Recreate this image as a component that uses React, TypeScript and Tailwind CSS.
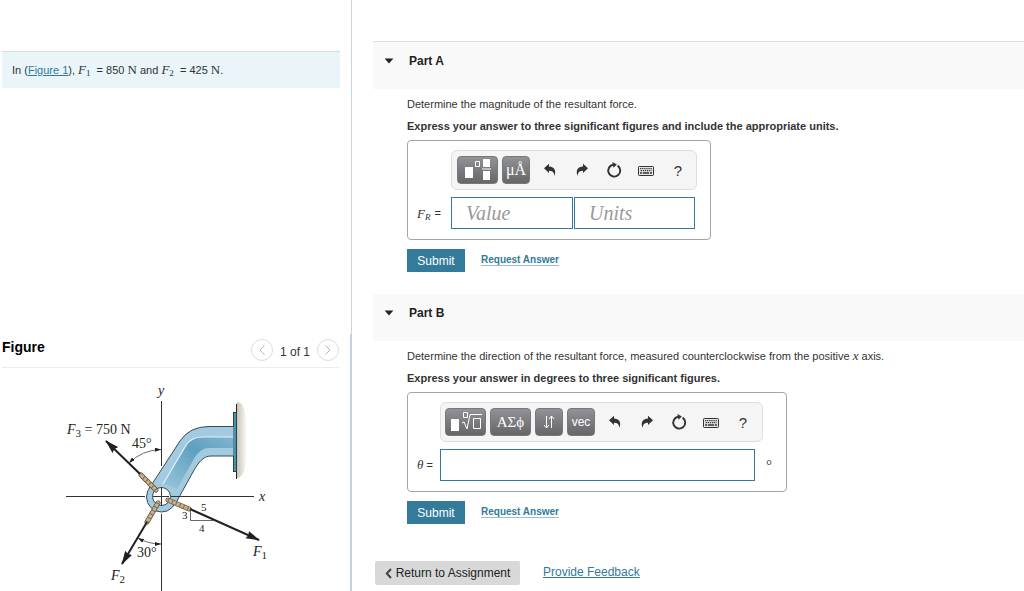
import React from 'react';

const sans = 'font-["Liberation_Sans",Arial,sans-serif]';
const serif = 'font-["Liberation_Serif",serif]';

const Sym: React.FC<{ name: string; sub?: string }> = ({ name, sub }) => (
  <span className='font-["Liberation_Serif",serif] text-[13px] leading-none'>
    <i>{name}</i>
    {sub && <sub className={`bottom-[-2px] text-[9px] ${sub === 'R' ? 'italic' : ''}`}>{sub}</sub>}
  </span>
);

const Unit: React.FC = () => (
  <span className='font-["Liberation_Serif",serif] text-[13px] leading-none'>N</span>
);

/* Dark gray template buttons in the equation toolbar */
const KeyButton: React.FC<{ label: string; wide?: boolean; children: React.ReactNode }> = ({ label, wide, children }) => (
  <button
    type="button"
    aria-label={label}
    className={`flex h-7 shrink-0 items-center justify-center rounded-[4px] border border-[#77777c] bg-linear-to-b from-[#929297] to-[#666668] leading-none text-white ${wide ? 'w-[41px]' : 'w-7'}`}
  >
    {children}
  </button>
);

const IconButton: React.FC<{ label: string; children: React.ReactNode }> = ({ label, children }) => (
  <button type="button" aria-label={label} className="flex h-7 w-8 shrink-0 items-center justify-center text-[#333]">
    {children}
  </button>
);

const ToolIcons: React.FC = () => (
  <div className="flex">
    <IconButton label="Undo">
      <svg width="14" height="14" viewBox="0 0 14 14" fill="currentColor">
        <path d="M1 5.3 6 .8v2.8c4.8.2 7.8 3.6 5.4 9.4C11.3 9.5 9.6 7.8 6 7.8V10z" />
      </svg>
    </IconButton>
    <IconButton label="Redo">
      <svg width="14" height="14" viewBox="0 0 14 14" fill="currentColor">
        <path d="M13 5.3 8 .8v2.8C3.2 3.8.2 7.2 2.6 13 2.7 9.5 4.4 7.8 8 7.8V10z" />
      </svg>
    </IconButton>
    <IconButton label="Reset">
      <svg width="16" height="18" viewBox="0 0 16 18" fill="none">
        <path d="M11.6 4.6A6 6 0 1 1 7 3.7" stroke="currentColor" strokeWidth="1.9" />
        <path d="M6.4.9 10.9 3.4 7.4 6.8z" fill="currentColor" />
      </svg>
    </IconButton>
    <IconButton label="Keyboard shortcuts">
      <svg width="18" height="12" viewBox="0 0 18 12" fill="none" stroke="currentColor" className="mt-0.5">
        <rect x="1.5" y="1.5" width="15" height="9" rx=".8" fill="#e8e8e8" />
        <path d="M3 3.7h12M3.7 5.7h11" strokeWidth="1.2" strokeDasharray="1.3 .8" />
        <path d="M3 8h2m.8 0h6.4m.8 0h2" strokeWidth="1.3" />
      </svg>
    </IconButton>
    <IconButton label="Help">
      <span className="text-[15px] leading-none">?</span>
    </IconButton>
  </div>
);

const PartHeader: React.FC<{ title: string; first?: boolean }> = ({ title, first }) => (
  <header className={`bg-[#f9f9f9] ${first ? 'border-t border-[#dcdfe0]' : ''}`}>
    <button type="button" aria-expanded="true" className="flex h-[47px] w-full items-start gap-[15px] pt-2.5 pl-[11px] text-[12px] leading-[18px] font-bold text-[#222]">
      <svg width="10" height="6" viewBox="0 0 10 6" className="mt-1.5">
        <path d="M.6.5h8.8L5 5.5z" fill="#222" />
      </svg>
      {title}
    </button>
  </header>
);

const Actions: React.FC = () => (
  <div className="mt-[9px] flex items-center gap-4">
    <button type="submit" className="h-[23px] w-[58px] bg-[#337a9b] text-[12px] leading-none text-white">
      Submit
    </button>
    <a href="#answer" className="-mt-0.5 border-b border-[#9cc0d0] text-[10px] leading-[11px] font-bold text-[#337a9b]">
      Request Answer
    </a>
  </div>
);

const Rope: React.FC<{ d: string }> = ({ d }) => (
  <g fill="none">
    <path d={d} stroke="#594735" strokeWidth="5" strokeLinecap="round" />
    <path d={d} stroke="#c6b08d" strokeWidth="3.6" strokeLinecap="round" />
    <path d={d} stroke="#7d664b" strokeWidth="3.6" strokeDasharray="1 3.2" />
  </g>
);

const ForceDiagram: React.FC = () => (
  <svg
    width="337"
    height="223"
    viewBox="2 368 337 223"
    role="img"
    aria-label="Bracket with three forces"
    className='block font-["Liberation_Serif",serif]'
  >
    <defs>
      <linearGradient id="wall" x1="0" x2="1">
        <stop offset="0" stopColor="#c9c5b5" />
        <stop offset="1" stopColor="#f8f7f3" />
      </linearGradient>
      <linearGradient id="shine" x1="0" y1="1" x2="1" y2="0">
        <stop offset="0" stopColor="#9bc5db" />
        <stop offset=".6" stopColor="#5fa0bf" />
        <stop offset="1" stopColor="#80b5ce" />
      </linearGradient>
      <marker id="tip" viewBox="0 0 14 8" refX="13" refY="4" markerWidth="14" markerHeight="9" markerUnits="userSpaceOnUse" orient="auto-start-reverse">
        <path d="M0 0 14 4 0 8 1.5 4z" fill="#231f20" />
      </marker>
      <marker id="small" viewBox="0 0 6 4" refX="6" refY="2" markerWidth="6" markerHeight="4" markerUnits="userSpaceOnUse" orient="auto-start-reverse">
        <path d="M0 0 6 2 0 4z" fill="#231f20" />
      </marker>
    </defs>

    {/* wall and mounting plate */}
    <path d="M237 402c6-1 9 10 9 20v36c0 12-4 20-9 20z" fill="url(#wall)" />
    <path d="M236.5 404v75" stroke="#222" />
    <rect x="233.5" y="412.5" width="3" height="59" fill="#4c91ad" stroke="#24414d" />

    {/* bracket, with its ring at the origin */}
    <circle cx="161.5" cy="497" r="15" fill="#a3cbe0" stroke="#3c4a52" />
    <path d="M148.5 489.5 180 441q9.5-14.5 29-14.5h24.5v29.5H211c-8 0-13 7-18 16l-18 32.5z" fill="#a3cbe0" />
    <path d="M163 484l22-37q5-10 18-10h30v11h-24q-8 0-14 9l-18 32z" fill="url(#shine)" />
    <path d="M163 484l22-37q5-10 18-10h30" fill="none" stroke="#e4f1f7" strokeWidth="1.2" />
    <path d="M233.5 426.5H209q-19.5 0-29 14.5l-31.5 48.5M175 504.5 193 472c5-9 10-16 18-16h22.5" fill="none" stroke="#3c4a52" />
    <circle cx="161.5" cy="496.5" r="9" fill="#fff" stroke="#3c4a52" />

    {/* axes */}
    <path d="M161.5 401v65M161.5 487v19M161.5 514v77M66 496.5h79M153 496.5h16M171 496.5h83" stroke="#333" />

    {/* forces */}
    <Rope d="M156 490 141 475" />
    <Rope d="M168 500 189 509" />
    <Rope d="M158 503 147 522" />
    <g stroke="#231f20" strokeWidth="2">
      <path d="M140 474 106 441" markerEnd="url(#tip)" />
      <path d="M190 509 259 540" markerEnd="url(#tip)" />
      <path d="M147 522 122 564" markerEnd="url(#tip)" />
    </g>
    <g fill="none" stroke="#444" strokeWidth=".8">
      <path d="M129 463q13-13 32-13.5" markerStart="url(#small)" markerEnd="url(#small)" />
      <path d="M138 538q10 6 23 6" markerStart="url(#small)" markerEnd="url(#small)" />
      <path d="M190.5 509v11.5h24" />
    </g>

    <g fill="#231f20" fontSize="14">
      <text x="158" y="395" fontStyle="italic">y</text>
      <text x="259" y="501" fontStyle="italic">x</text>
      <text x="67" y="434"><tspan fontStyle="italic">F</tspan><tspan fontSize="11" dy="3">3</tspan><tspan dy="-3"> = 750 N</tspan></text>
      <text x="132" y="448">45°</text>
      <text x="137" y="557">30°</text>
      <text x="111" y="580"><tspan fontStyle="italic">F</tspan><tspan fontSize="11" dy="3">2</tspan></text>
      <text x="253" y="556"><tspan fontStyle="italic">F</tspan><tspan fontSize="11" dy="3">1</tspan></text>
    </g>
    <g fill="#231f20" fontSize="11">
      <text x="201" y="511">5</text>
      <text x="182" y="519">3</text>
      <text x="199" y="532">4</text>
    </g>
  </svg>
);

const pagerButton = 'flex size-[22px] items-center justify-center rounded-full border border-[#dedede]';

const LeftPane: React.FC = () => (
  <aside className="flex flex-col border-r border-[#ccd3da] pt-[51px]">
    <p className="mr-[11px] ml-0.5 h-[37px] border-t border-[#d6dddf] bg-[#e9f5f8] pl-2.5 text-[11px] leading-[36px] whitespace-nowrap">
      In (<a href="#figure" className="text-[#337a9b] underline">Figure 1</a>), <Sym name="F" sub="1" />
      {'\u00a0'} = 850 <Unit /> and <Sym name="F" sub="2" />
      {'\u00a0'} = 425 <Unit />.
    </p>
    <section id="figure" className="mt-auto border-r border-[#bdd0e2] pr-[11px] pl-0.5">
      <div className="flex h-[34px] justify-between border-b border-[#ececec] pt-[5px]">
        <h2 className="text-[14px] leading-4 font-bold text-black">Figure</h2>
        <div className="flex gap-[7px]">
          <button type="button" aria-label="Previous figure" className={pagerButton}>
            <svg width="6" height="10" viewBox="0 0 6 10" fill="none" stroke="#b5b5b5"><path d="M5.5.5 1 5l4.5 4.5" /></svg>
          </button>
          <span className="pt-0.5 text-[12px] leading-[22px]">1 of 1</span>
          <button type="button" aria-label="Next figure" className={pagerButton}>
            <svg width="6" height="10" viewBox="0 0 6 10" fill="none" stroke="#b5b5b5"><path d="M.5.5 5 5 .5 9.5" /></svg>
          </button>
        </div>
      </div>
      <ForceDiagram />
    </section>
  </aside>
);

const toolbar = 'flex h-10 w-fit items-center gap-1 rounded-[6px] border border-[#dedede] bg-[#f5f5f5]';
const field = 'h-8 border border-[#337a9b] bg-white px-3.5 text-[20px] italic placeholder:text-[#999] focus:outline-none';
const answerBox = 'mt-[3px] w-fit rounded-[4px] border border-[#a6a6a6] pt-[9px] pb-2.5 pl-[9px]';

const App: React.FC = () => {
  return (
    <div className={`grid min-h-screen grid-cols-[11fr_21fr] bg-white text-[#333] ${sans}`}>
      <LeftPane />

      <main className="pt-[41px] pl-[21px]">
        <section>
          <PartHeader title="Part A" first />
          <form className="pt-1 pb-[22px] pl-[34px] text-[11px] leading-[22px]" onSubmit={(e) => e.preventDefault()}>
            <p>Determine the magnitude of the resultant force.</p>
            <p className="font-bold">Express your answer to three significant figures and include the appropriate units.</p>
            <div className={`${answerBox} pr-[13px]`}>
              <div className={`${toolbar} ml-[34px] pr-0.5 pl-[5px]`}>
                <KeyButton label="Templates" wide>
                  <svg width="27" height="22" viewBox="0 0 27 22" fill="none">
                    <path d="M1 8h8v11H1zM19 0h7v8h-7zM19 12h7v9h-7z" fill="#fff" />
                    <path d="M18 10h9M11.5 2.5h4v5h-4z" stroke="#fff" />
                  </svg>
                </KeyButton>
                <KeyButton label="Units symbols">
                  <span className={`text-[16px] ${serif}`}>μÅ</span>
                </KeyButton>
                <ToolIcons />
              </div>
              <div className="mt-[7px] flex items-center">
                <label htmlFor="value" className="flex w-[34px] items-center gap-1">
                  <Sym name="F" sub="R" /> =
                </label>
                <input id="value" placeholder="Value" className={`${field} ${serif} w-[122px]`} />
                <input aria-label="Units" placeholder="Units" className={`${field} ${serif} ml-px w-[121px]`} />
              </div>
            </div>
            <Actions />
          </form>
        </section>

        <section>
          <PartHeader title="Part B" />
          <form className="pt-1 pl-[34px] text-[11px] leading-[22px]" onSubmit={(e) => e.preventDefault()}>
            <p>
              Determine the direction of the resultant force, measured counterclockwise from the positive <Sym name="x" /> axis.
            </p>
            <p className="font-bold">Express your answer in degrees to three significant figures.</p>
            <div className={`${answerBox} pr-3.5`}>
              <div className={`${toolbar} ml-[23px] pr-[3px] pl-1`}>
                <KeyButton label="Root templates" wide>
                  <svg width="32" height="20" viewBox="0 0 32 20" fill="none" stroke="#fff">
                    <path d="M1 7h8v12H1z" fill="#fff" stroke="none" />
                    <path d="M13.5.5h4v5h-4zM12 11l2-1 3 7 3-14.5h12M23.5 6.5h7v10h-7z" />
                  </svg>
                </KeyButton>
                <KeyButton label="Greek letters" wide>
                  <span className={`text-[15px] ${serif}`}>ΑΣϕ</span>
                </KeyButton>
                <KeyButton label="Arrows">
                  <svg width="12" height="14" viewBox="0 0 12 14" fill="none" stroke="#fff">
                    <path d="M3.5 1v12M1 10l2.5 3L6 10M8.5 13V1M6 4l2.5-3L11 4" />
                  </svg>
                </KeyButton>
                <KeyButton label="Vectors">
                  <span className="text-[12px]">vec</span>
                </KeyButton>
                <ToolIcons />
              </div>
              <div className="mt-[7px] flex items-center">
                <label htmlFor="angle" className="w-[23px] whitespace-nowrap">
                  <Sym name="θ" /> =
                </label>
                <input id="angle" className={`${field} ${serif} w-[315px]`} />
                <span className={`ml-[11px] text-[15px] ${serif}`}>°</span>
              </div>
            </div>
            <Actions />
          </form>
        </section>

        <footer className="mt-[37px] ml-0.5 flex gap-[23px] text-[12px]">
          <button type="button" className="flex h-6 w-[145px] items-center justify-center gap-1 rounded-[2px] bg-[#d8d8d8] text-[#222]">
            <svg width="7" height="11" viewBox="0 0 7 11" fill="none" stroke="#444" strokeWidth="2"><path d="M6 1 1.8 5.5 6 10" /></svg>
            Return to Assignment
          </button>
          <a href="#feedback" className="leading-[22px] text-[#337a9b] underline">Provide Feedback</a>
        </footer>
      </main>
    </div>
  );
};

export default App;
